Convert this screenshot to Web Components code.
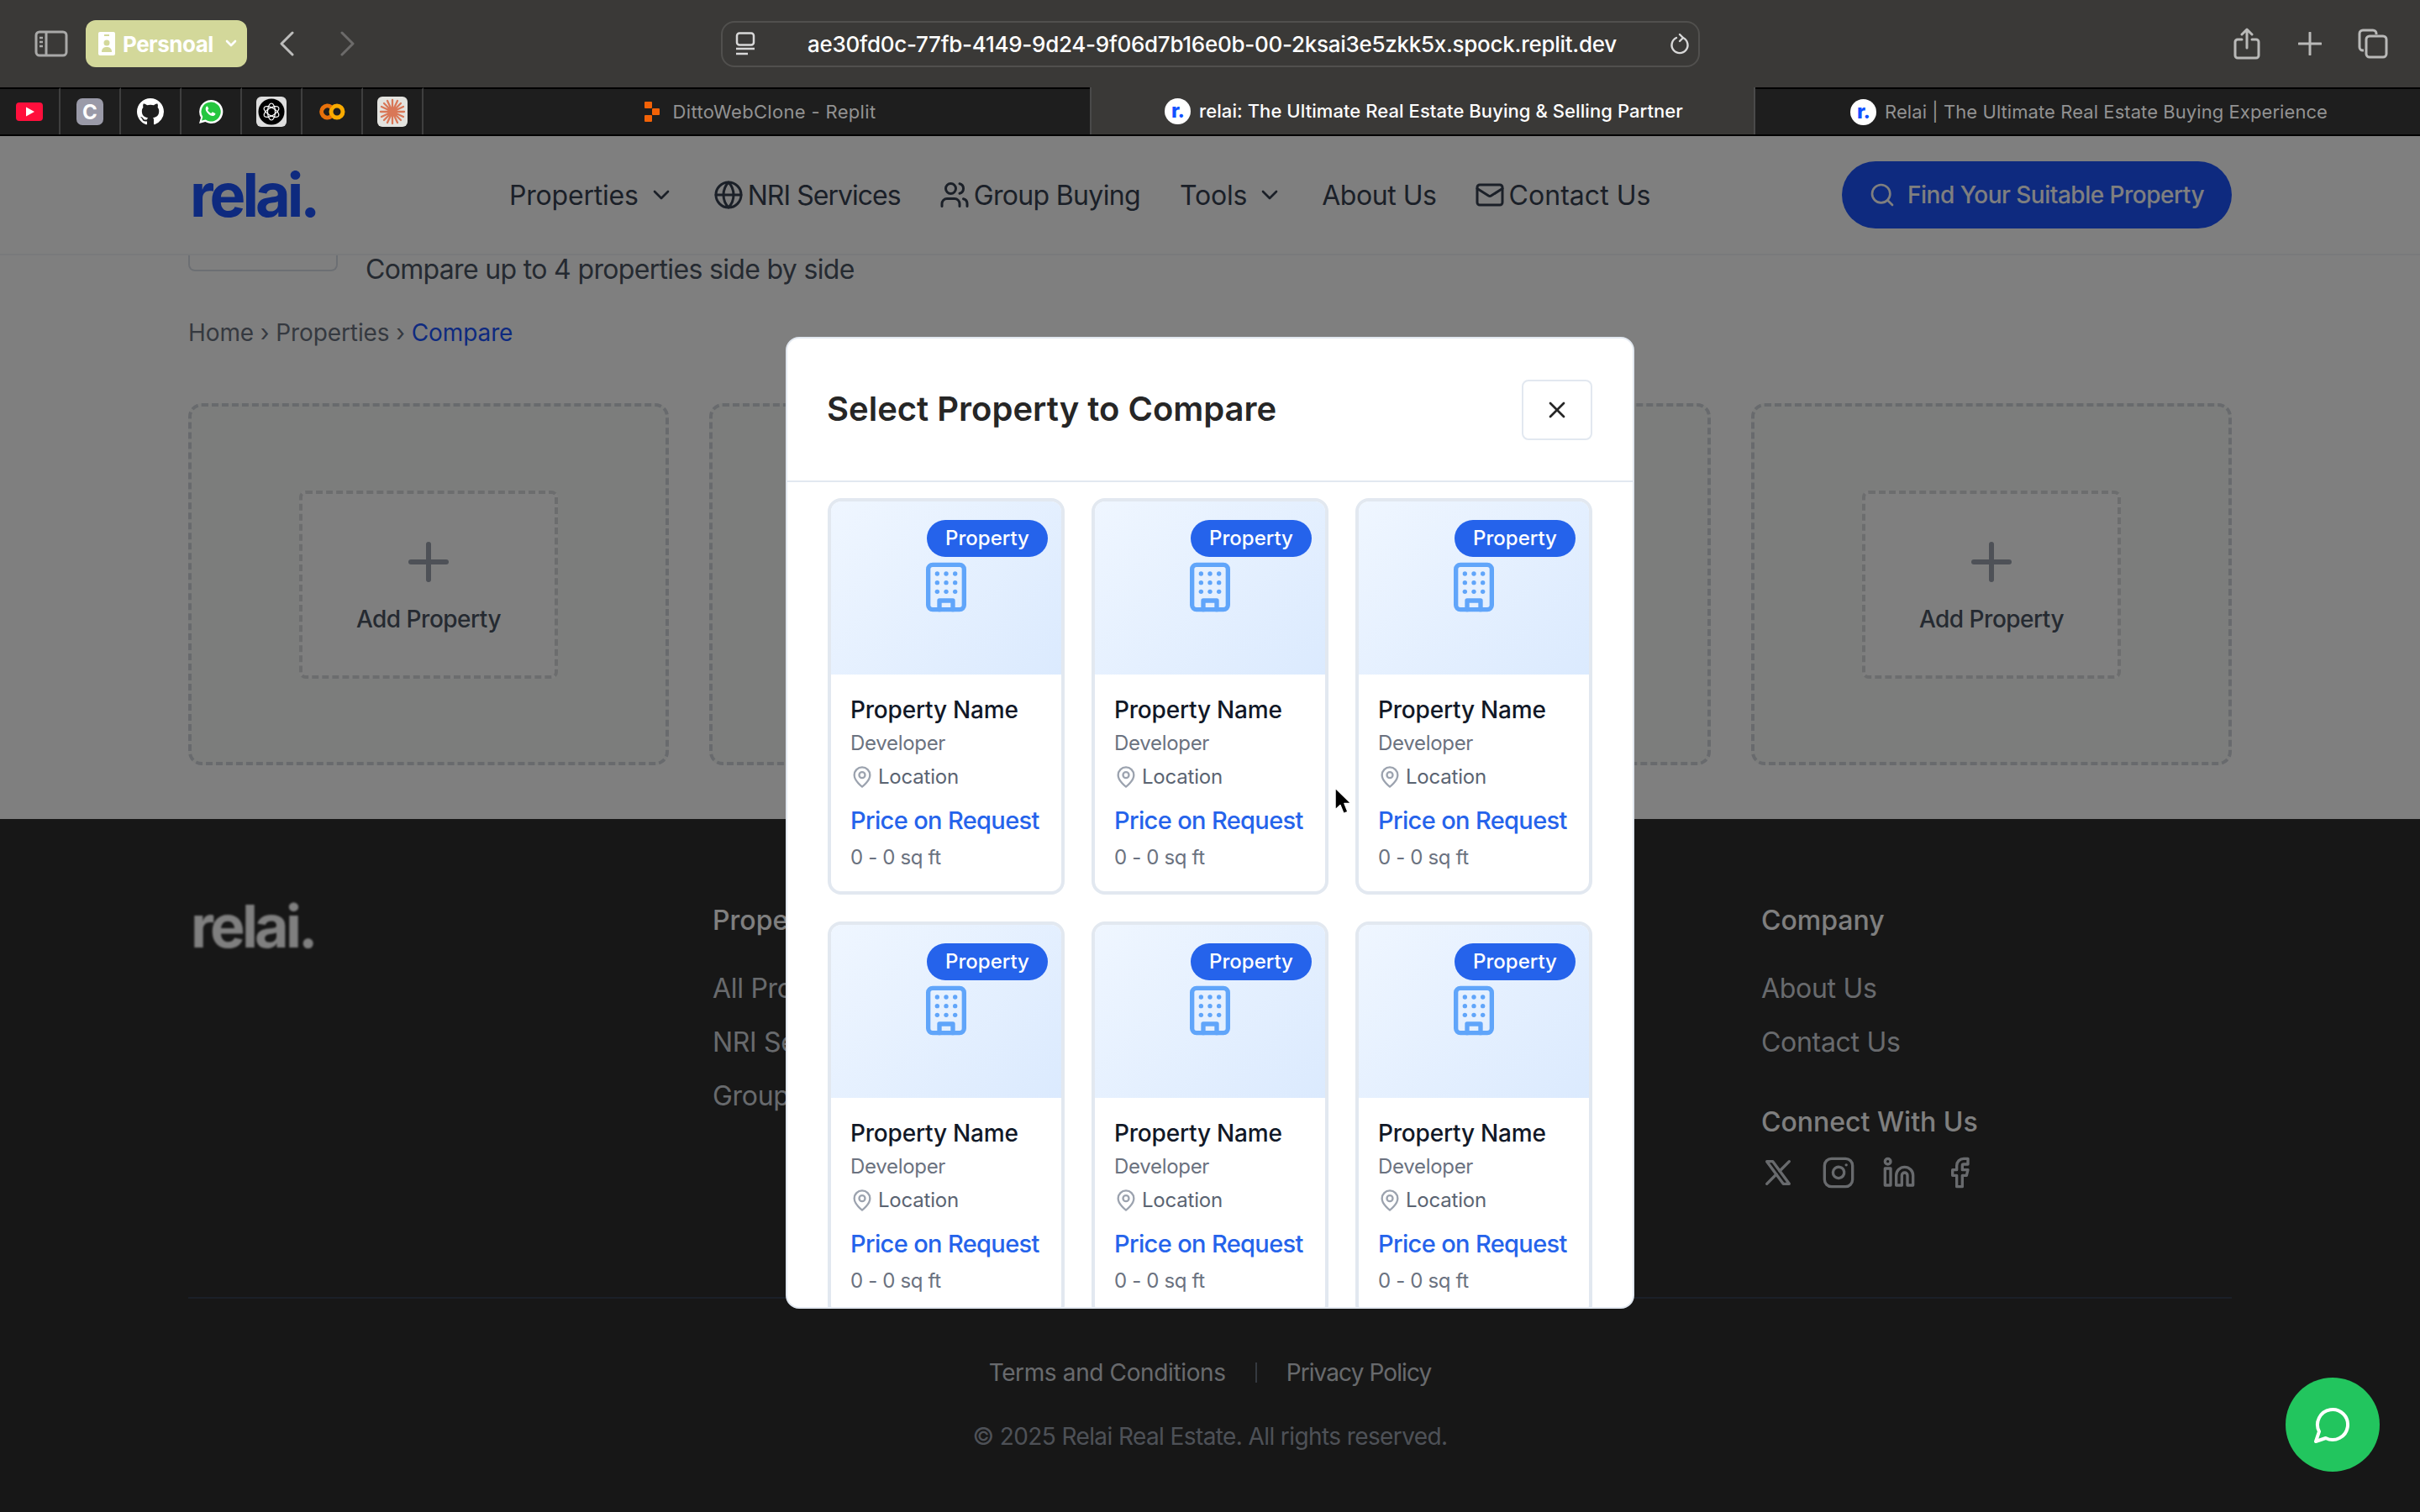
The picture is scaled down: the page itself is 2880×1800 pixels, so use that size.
<!DOCTYPE html>
<html lang="en">
<head>
<meta charset="utf-8">
<title>Relai - Compare</title>
<style>
  html, body { margin: 0; padding: 0; }
  body { width: 2880px; height: 1800px; overflow: hidden; background: #3a3937; font-family: Inter, "Liberation Sans", sans-serif; }
</style>
</head>
<body>
<browser-toolbar></browser-toolbar>
<browser-tabs></browser-tabs>
<app-window>
  <site-nav></site-nav>
  <compare-main></compare-main>
  <site-footer></site-footer>
  <select-modal slot="over"></select-modal>
  <chat-fab slot="over"></chat-fab>
  <mouse-arrow slot="over"></mouse-arrow>
</app-window>

<script>
const lucide = (size, width, body, extra = "") =>
  `<svg width="${size}" height="${size}" viewBox="0 0 24 24" fill="none" stroke="currentColor" stroke-width="${width}" stroke-linecap="round" stroke-linejoin="round" style="flex:none;display:block;${extra}">${body}</svg>`;

const ICONS = {
  chevron: `<path d="m6 9 6 6 6-6"/>`,
  globe: `<circle cx="12" cy="12" r="10"/><path d="M12 2a14.5 14.5 0 0 0 0 20 14.5 14.5 0 0 0 0-20"/><path d="M2 12h20"/>`,
  users: `<path d="M16 21v-2a4 4 0 0 0-4-4H6a4 4 0 0 0-4 4v2"/><circle cx="9" cy="7" r="4"/><path d="M22 21v-2a4 4 0 0 0-3-3.87"/><path d="M16 3.13a4 4 0 0 1 0 7.75"/>`,
  mail: `<rect width="20" height="16" x="2" y="4" rx="2"/><path d="m22 7-8.97 5.7a1.94 1.94 0 0 1-2.06 0L2 7"/>`,
  search: `<circle cx="11" cy="11" r="8"/><path d="m21 21-4.3-4.3"/>`,
  pin: `<path d="M20 10c0 6-8 12-8 12s-8-6-8-12a8 8 0 0 1 16 0Z"/><circle cx="12" cy="10" r="3"/>`,
  x: `<path d="M18 6 6 18"/><path d="m6 6 12 12"/>`,
  plus: `<path d="M5 12h14"/><path d="M12 5v14"/>`,
  building: `<rect width="16" height="20" x="4" y="2" rx="2" ry="2"/><path d="M9 22v-4h6v4"/><path d="M8 6h.01"/><path d="M16 6h.01"/><path d="M12 6h.01"/><path d="M12 10h.01"/><path d="M12 14h.01"/><path d="M16 10h.01"/><path d="M16 14h.01"/><path d="M8 10h.01"/><path d="M8 14h.01"/>`,
  twitter: `<path d="M4 4l11.733 16h4.267l-11.733 -16z"/><path d="M4 20l6.768 -6.768m2.46 -2.46l6.772 -6.772"/>`,
  instagram: `<rect width="20" height="20" x="2" y="2" rx="5" ry="5"/><path d="M16 11.37A4 4 0 1 1 12.63 8 4 4 0 0 1 16 11.37z"/><line x1="17.5" x2="17.51" y1="6.5" y2="6.5"/>`,
  linkedin: `<path d="M16 8a6 6 0 0 1 6 6v7h-4v-7a2 2 0 0 0-2-2 2 2 0 0 0-2 2v7h-4v-7a6 6 0 0 1 6-6z"/><rect width="4" height="12" x="2" y="9"/><circle cx="4" cy="4" r="2"/>`,
  facebook: `<path d="M18 2h-3a5 5 0 0 0-5 5v3H7v4h3v8h4v-8h3l1-4h-4V7a1 1 0 0 1 1-1h3z"/>`,
  message: `<path d="M7.9 20A9 9 0 1 0 4 16.1L2 22Z"/>`
};

class ShadowBox extends HTMLElement {
  constructor() {
    super();
    this.shadowDOM = this.attachShadow({mode: "open"});
  }
  connectedCallback() {
    this.shadowDOM.innerHTML = this.markup();
  }
}

class BrowserToolbar extends ShadowBox {
  markup() {
    return `
    <style>
      :host { display: flex; align-items: center; height: 104px; background: #3a3937; color: #fff; box-sizing: border-box; }
      svg { display: block; flex: none; }
      .side { margin-left: 41px; }
      .profile { display: flex; align-items: center; width: 192px; height: 56px; margin-left: 21px; box-sizing: border-box; padding-left: 15px; background: #d3d89a; border-radius: 12px; font: 700 26px Inter, sans-serif; letter-spacing: -.5px; }
      .profile span { margin-left: 9px; }
      .back { margin-left: 38px; }
      .fwd { margin-left: 55px; }
      .url { display: flex; align-items: center; width: 1165px; height: 55px; margin-left: 435px; box-sizing: border-box; border: 2px solid #51504e; border-radius: 16px; }
      .url b { font: 500 26px Inter, sans-serif; margin-left: 62px; letter-spacing: -.28px; white-space: nowrap; }
      .url .site { margin-left: 15px; }
      .url .reload { margin-left: auto; margin-right: 10px; }
      .share { margin-left: 635px; }
    </style>
    <svg class="side" width="40" height="32" viewBox="0 0 40 32" fill="none" stroke="#a9a9a8" stroke-width="3"><rect x="2" y="2" width="36" height="28" rx="4"/><path d="M14 2v28"/><path d="M6 9h4M6 14h4M6 19h4" stroke-width="2.5"/></svg>
    <div class="profile">
      <svg width="20" height="28" viewBox="0 0 20 28"><rect width="20" height="28" rx="2" fill="#fff"/><circle cx="10" cy="13" r="3.5" fill="#d3d89a"/><path d="M4 24c0-5 3-6 6-6s6 1 6 6z" fill="#d3d89a"/><rect x="7" y="3" width="6" height="2" fill="#d3d89a"/></svg>
      <span>Persnoal</span>
      <svg style="margin-left:14px" width="14" height="10" viewBox="0 0 14 10" fill="none" stroke="#fff" stroke-width="2.6" stroke-linecap="round" stroke-linejoin="round"><path d="m2 2 5 5 5-5"/></svg>
    </div>
    <svg class="back" width="18" height="30" viewBox="0 0 18 30" fill="none" stroke="#bdbdbc" stroke-width="3" stroke-linecap="round" stroke-linejoin="round"><path d="M16 2 3 15l13 13"/></svg>
    <svg class="fwd" width="18" height="30" viewBox="0 0 18 30" fill="none" stroke="#6c6b6a" stroke-width="3" stroke-linecap="round" stroke-linejoin="round"><path d="m2 2 13 13L2 28"/></svg>
    <div class="url">
      <svg class="site" width="24" height="28" viewBox="0 0 24 28" fill="none" stroke="#d8d8d8" stroke-width="2.5"><rect x="2" y="1.5" width="20" height="14" rx="3"/><path d="M1 20h22M1 26h14"/></svg>
      <b>ae30fd0c-77fb-4149-9d24-9f06d7b16e0b-00-2ksai3e5zkk5x.spock.replit.dev</b>
      <svg class="reload" width="24" height="28" viewBox="0 0 24 28" fill="none" stroke="#d8d8d8" stroke-width="2.4" stroke-linecap="round"><path d="M8 7a9.5 9.5 0 1 0 8 0"/><path d="M12 3l4 4-4 4" stroke-linejoin="round"/></svg>
    </div>
    <svg class="share" width="32" height="38" viewBox="0 0 32 38" fill="none" stroke="#b9b9b8" stroke-width="3" stroke-linecap="round" stroke-linejoin="round"><path d="M10 14H5a3 3 0 0 0-3 3v16a3 3 0 0 0 3 3h22a3 3 0 0 0 3-3V17a3 3 0 0 0-3-3h-5"/><path d="M16 24V2M10 8l6-6 6 6"/></svg>
    <svg style="margin-left:45px" width="28" height="28" viewBox="0 0 28 28" fill="none" stroke="#b9b9b8" stroke-width="3" stroke-linecap="round"><path d="M14 1v26M1 14h26"/></svg>
    <svg style="margin-left:43px" width="36" height="36" viewBox="0 0 36 36" fill="none" stroke="#b9b9b8" stroke-width="3"><path d="M7 26H6a4 4 0 0 1-4-4V6a4 4 0 0 1 4-4h12a4 4 0 0 1 4 4v1"/><rect x="10" y="9" width="24" height="25" rx="4"/></svg>`;
  }
}

const RelaiBadge = `<span class="fav">r<i>.</i></span>`;

class BrowserTabs extends ShadowBox {
  markup() {
    return `
    <style>
      :host { display: flex; height: 58px; box-sizing: border-box; background: #1e1e1e; border-bottom: 2px solid #000; }
      svg { display: block; flex: none; }
      .pin { width: 72px; box-sizing: border-box; border-top: 2px solid #000; border-right: 2px solid #3f3f3f; display: flex; align-items: center; justify-content: center; }
      .c { width: 32px; height: 32px; border-radius: 7px; background: #9a9aa8; color: #fff; font: 700 24px Inter, sans-serif; display: flex; align-items: center; justify-content: center; }
      .tab { flex: 1; display: flex; align-items: center; justify-content: center; box-sizing: border-box; padding-left: 3px; font: 400 22px Inter, sans-serif; letter-spacing: .07px; color: #929292; border-top: 2px solid #000; white-space: nowrap; }
      .tab.active { background: #3a3937; color: #fff; border-top: 0; border-left: 2px solid #4a4a4a; border-right: 2px solid #4a4a4a; font-weight: 500; }
      .fav { width: 31px; height: 31px; border-radius: 50%; background: #fff; color: #1251ff; font: 800 24px/29px Inter, sans-serif; letter-spacing: -1px; text-align: center; margin-right: 10px; flex: none; }
      .fav i { font-style: normal; }
      .replit { margin-right: 16px; }
    </style>
    <div class="pin"><svg width="32" height="22" viewBox="0 0 32 22"><rect width="32" height="22" rx="4" fill="#ff0f3c"/><path d="M12 5.5 22 11l-10 5.5z" fill="#fff"/></svg></div>
    <div class="pin"><span class="c">C</span></div>
    <div class="pin"><svg width="32" height="32" viewBox="0 0 16 16" fill="#fff"><path d="M8 0C3.58 0 0 3.58 0 8c0 3.54 2.29 6.53 5.47 7.59.4.07.55-.17.55-.38 0-.19-.01-.82-.01-1.49-2.01.37-2.53-.49-2.69-.94-.09-.23-.48-.94-.82-1.13-.28-.15-.68-.52-.01-.53.63-.01 1.08.58 1.23.82.72 1.21 1.87.87 2.33.66.07-.52.28-.87.51-1.07-1.78-.2-3.64-.89-3.64-3.95 0-.87.31-1.59.82-2.15-.08-.2-.36-1.02.08-2.12 0 0 .67-.21 2.2.82.64-.18 1.32-.27 2-.27.68 0 1.36.09 2 .27 1.53-1.04 2.2-.82 2.2-.82.44 1.1.16 1.92.08 2.12.51.56.82 1.27.82 2.15 0 3.07-1.87 3.75-3.65 3.95.29.25.54.73.54 1.48 0 1.07-.01 1.93-.01 2.2 0 .21.15.46.55.38A8.013 8.013 0 0016 8c0-4.42-3.58-8-8-8z"/></svg></div>
    <div class="pin"><svg width="30" height="30" viewBox="0 0 30 30"><path d="M15 1a14 14 0 0 0-12 21L1 29l7.300-1.900A14 14 0 1 0 15 1z" fill="#fff"/><path d="M15 3.500a11.500 11.500 0 0 0-9.700 17.600L4 25.600l4.600-1.200A11.500 11.500 0 1 0 15 3.500z" fill="#25c63f"/><path d="M11 8.500c-.6 0-1.500.4-2 1.600-.8 2 .1 4.400 2.200 6.700 2.200 2.400 4.800 3.600 6.700 3.200 1.400-.3 2.400-1.400 2.500-2.400 0-.5-.3-.7-.7-.9l-2.500-1.200c-.4-.2-.7 0-.9.3l-1 1.200c-1.700-.6-3.500-2.300-4.200-3.900l.9-1c.3-.3.300-.6.100-1l-1-2.200c-.2-.3-.4-.4-.6-.4z" fill="#fff"/></svg></div>
    <div class="pin"><svg width="36" height="36" viewBox="0 0 36 36"><rect width="36" height="36" rx="6" fill="#dedede"/><circle cx="18" cy="18" r="15.500" fill="#000"/><g fill="none" stroke="#fff" stroke-width="1.200"><ellipse cx="18" cy="18" rx="4.500" ry="10"/><ellipse cx="18" cy="18" rx="4.500" ry="10" transform="rotate(60 18 18)"/><ellipse cx="18" cy="18" rx="4.500" ry="10" transform="rotate(120 18 18)"/></g></svg></div>
    <div class="pin"><svg width="32" height="20" viewBox="0 0 32 20" fill="none" stroke-width="5"><circle cx="22" cy="10" r="7" stroke="#f9ab00"/><path d="M15 4.500a7 7 0 1 0 0 11" stroke="#e8710a"/></svg></div>
    <div class="pin"><svg width="36" height="36" viewBox="0 0 36 36"><rect width="36" height="36" rx="6" fill="#e3e3df"/><g stroke="#d97757" stroke-width="2.300" stroke-linecap="round"><path d="M18 4v28M4 18h28M8 8l20 20M28 8 8 28M12 5l12 26M24 5 12 31M5 12l26 12M31 12 5 24"/></g></svg></div>
    <div class="tab" style="flex:none;width:793px;letter-spacing:.33px;padding-left:8px">
      <svg class="replit" width="18" height="24" viewBox="0 0 18 24" fill="#f26207"><rect width="9" height="8" rx="1"/><rect x="9" y="8" width="9" height="8" rx="1"/><rect y="16" width="9" height="8" rx="1"/></svg>
      DittoWebClone - Replit
    </div>
    <div class="tab active" style="flex:none;width:792px">${RelaiBadge}relai: The Ultimate Real Estate Buying &amp; Selling Partner</div>
    <div class="tab">${RelaiBadge}Relai | The Ultimate Real Estate Buying Experience</div>`;
  }
}

class AppWindow extends ShadowBox {
  markup() {
    return `
    <style>
      :host { display: block; position: relative; height: 1638px; overflow: hidden; background: #fff; }
      .dim { position: absolute; inset: 0; background: rgba(0,0,0,.5); }
    </style>
    <slot></slot>
    <div class="dim"></div>
    <slot name="over"></slot>`;
  }
}

class SiteNav extends ShadowBox {
  markup() {
    return `
    <style>
      :host { display: flex; align-items: center; height: 142px; box-sizing: border-box; padding: 0 224px 0 226px; background: #fff; border-bottom: 2px solid #f3f4f6; color: #374151; font: 400 32px Inter, sans-serif; }
      .logo { font: 700 72px/1 Inter, sans-serif; letter-spacing: -4px; color: #1c54ff; width: 380px; margin-top: -1px; }
      a { display: flex; align-items: center; margin-right: 46px; white-space: nowrap; letter-spacing: -.2px; }
      a svg.ch { margin-left: 11px; }
      a svg.ic { margin-right: 5px; }
      .cta { display: flex; align-items: center; margin-left: auto; width: 464px; height: 80px; box-sizing: border-box; padding-left: 32px; border-radius: 40px; background: #1c54ff; color: #fff; font: 500 28px Inter, sans-serif; letter-spacing: -.5px; white-space: nowrap; }
      .cta svg { margin-right: 14px; }
    </style>
    <div class="logo">relai.</div>
    <a>Properties${lucide(32, 2, ICONS.chevron).replace("<svg", '<svg class="ch"')}</a>
    <a style="letter-spacing:-.97px">${lucide(36, 2, ICONS.globe).replace("<svg", '<svg class="ic"')}NRI Services</a>
    <a style="letter-spacing:-.66px;margin-right:47px">${lucide(36, 2, ICONS.users).replace("<svg", '<svg class="ic"')}Group Buying</a>
    <a>Tools${lucide(32, 2, ICONS.chevron).replace("<svg", '<svg class="ch"')}</a>
    <a style="letter-spacing:-.45px;margin-right:45px">About Us</a>
    <a style="letter-spacing:.05px">${lucide(36, 2, ICONS.mail).replace("<svg", '<svg class="ic"')}Contact Us</a>
    <div class="cta">${lucide(32, 2, ICONS.search)}Find Your Suitable Property</div>`;
  }
}

class CompareSlot extends ShadowBox {
  markup() {
    const inner = this.hasAttribute("empty") ? "" : `
      <div class="add">${lucide(72, 2, ICONS.plus, "color:#9ca3af")}<span>Add Property</span></div>`;
    return `
    <style>
      :host { display: flex; align-items: center; justify-content: center; height: 431px; box-sizing: border-box; border: 4px dashed #d1d5db; border-radius: 16px; background: #f8fbf8; }
      .add { display: flex; flex-direction: column; align-items: center; width: 308px; height: 224px; box-sizing: border-box; padding-top: 45px; border: 4px dashed #d8dadd; border-radius: 8px; background: #fff; }
      span { font: 500 28px/40px Inter, sans-serif; color: #4b5563; margin-top: 12px; letter-spacing: -.5px; }
    </style>${inner}`;
  }
}

class CompareMain extends ShadowBox {
  markup() {
    return `
    <style>
      :host { display: block; padding: 0 224px 64px; height: 671px; box-sizing: border-box; background: #fff; font-family: Inter, sans-serif; }
      .head { display: flex; align-items: flex-start; gap: 33px; }
      .back { width: 178px; height: 19px; box-sizing: border-box; border: 2px solid #d9dee6; border-top: 0; border-radius: 0 0 8px 8px; }
      .sub { font-size: 32px; line-height: 34px; color: #4b5563; letter-spacing: -.67px; }
      .crumbs { margin-top: 38px; font-size: 28px; line-height: 40px; color: #6b7280; letter-spacing: -.1px; }
      .crumbs b { font-weight: 400; color: #1c54ff; }
      .grid { display: grid; grid-template-columns: repeat(4, 1fr); gap: 48px; margin-top: 64px; }
    </style>
    <div class="head"><div class="back"></div><div class="sub">Compare up to 4 properties side by side</div></div>
    <div class="crumbs">Home › Properties › <b>Compare</b></div>
    <div class="grid">
      <compare-slot></compare-slot>
      <compare-slot empty></compare-slot>
      <compare-slot empty></compare-slot>
      <compare-slot></compare-slot>
    </div>`;
  }
}

class SiteFooter extends ShadowBox {
  markup() {
    return `
    <style>
      :host { display: block; box-sizing: border-box; height: 825px; padding: 99px 224px 0; background: #2e2e2e; color: #d1d5db; font: 400 32px Inter, sans-serif; }
      .grid { display: grid; grid-template-columns: repeat(4, 1fr); gap: 64px; }
      .logo { font: 700 70px/1 Inter, sans-serif; letter-spacing: -3.8px; color: #fff; margin: -6px 0 0 3px; filter: blur(1px); }
      h4 { margin: 0; font: 500 32px/44px Inter, sans-serif; color: #fff; }
      p { margin: 20px 0 0; line-height: 44px; letter-spacing: -.3px; }
      h4 + p { margin-top: 37px; }
      p + h4 { margin-top: 51px; }
      .social { display: flex; gap: 32px; margin-top: 18px; color: #d1d5db; }
      .rule { height: 2px; margin-top: 128px; background: #374151; }
      .legal { display: flex; justify-content: center; align-items: center; margin-top: 66px; font-size: 28px; line-height: 44px; }
      .legal i { width: 2px; height: 24px; margin: 0 35px; background: #6b7280; }
      .copy { margin-top: 32px; text-align: center; font-size: 28px; line-height: 44px; color: #9ca3af; letter-spacing: -.6px; }
    </style>
    <div class="grid">
      <div class="logo">relai.</div>
      <div><h4>Properties</h4><p>All Properties</p><p>NRI Services</p><p>Group Buying</p></div>
      <div></div>
      <div>
        <h4>Company</h4><p>About Us</p><p>Contact Us</p>
        <h4>Connect With Us</h4>
        <div class="social">${lucide(40, 2, ICONS.twitter)}${lucide(40, 2, ICONS.instagram)}${lucide(40, 2, ICONS.linkedin)}${lucide(40, 2, ICONS.facebook)}</div>
      </div>
    </div>
    <div class="rule"></div>
    <div class="legal"><span style="letter-spacing:-.37px">Terms and Conditions</span><i></i><span style="letter-spacing:-.9px">Privacy Policy</span></div>
    <div class="copy">© 2025 Relai Real Estate. All rights reserved.</div>`;
  }
}

class PropertyCard extends ShadowBox {
  markup() {
    return `
    <style>
      :host { display: block; box-sizing: border-box; height: 472px; border: 4px solid #e2e8f0; border-radius: 16px; overflow: hidden; background: #fff; font-family: Inter, sans-serif; }
      .img { position: relative; height: 206px; display: flex; align-items: center; justify-content: center; background: linear-gradient(135deg, #eff6ff, #dbeafe); color: #60a5fa; }
      .img svg { margin: -3px 0 0 -1px; }
      .badge { position: absolute; top: 22px; right: 16px; width: 144px; height: 44px; border-radius: 22px; background: #2563eb; color: #fff; font: 500 24px/44px Inter, sans-serif; text-align: center; }
      .body { padding: 24px 0 0 23px; white-space: nowrap; }
      .name { font: 500 28px/36px Inter, sans-serif; letter-spacing: -.2px; color: #111827; }
      .dev { margin-top: 6px; font-size: 24px; line-height: 32px; letter-spacing: -.3px; color: #6b7280; }
      .loc { display: flex; align-items: center; margin-top: 8px; font-size: 24px; line-height: 32px; letter-spacing: -.2px; color: #5b6472; }
      .loc svg { margin-right: 5px; color: #9ca3af; }
      .price { margin-top: 16px; font: 500 29px/40px Inter, sans-serif; letter-spacing: -.64px; color: #2563eb; }
      .area { margin-top: 8px; font-size: 24px; line-height: 32px; letter-spacing: -.35px; color: #6b7280; }
    </style>
    <div class="img"><span class="badge">Property</span>${lucide(64, 2, ICONS.building)}</div>
    <div class="body">
      <div class="name">Property Name</div>
      <div class="dev">Developer</div>
      <div class="loc">${lucide(28, 2, ICONS.pin)}Location</div>
      <div class="price">Price on Request</div>
      <div class="area">0 - 0 sq ft</div>
    </div>`;
  }
}

class SelectModal extends ShadowBox {
  markup() {
    return `
    <style>
      :host { display: block; position: absolute; left: 935px; top: 239px; width: 1010px; height: 1157px; box-sizing: border-box; border: 2px solid #e2e8f0; border-radius: 16px; background: #fff; overflow: hidden; font-family: Inter, sans-serif; }
      header { display: flex; align-items: center; justify-content: space-between; height: 171px; box-sizing: border-box; padding: 0 48px; border-bottom: 2px solid #e2e8f0; }
      h2 { margin: 0 0 2px -1px; font: 600 40px Inter, sans-serif; color: #262626; }
      button { display: flex; align-items: center; justify-content: center; width: 84px; height: 72px; padding: 0; border: 2px solid #e2e8f0; border-radius: 8px; background: #fff; color: #262626; }
      .grid { display: grid; grid-template-columns: repeat(3, 282px); gap: 32px; padding: 19px 48px 0; }
    </style>
    <header>
      <h2>Select Property to Compare</h2>
      <button>${lucide(32, 2, ICONS.x)}</button>
    </header>
    <div class="grid">
      <property-card></property-card><property-card></property-card><property-card></property-card>
      <property-card></property-card><property-card></property-card><property-card></property-card>
    </div>`;
  }
}

class ChatFab extends ShadowBox {
  markup() {
    return `
    <style>
      :host { position: absolute; left: 2720px; top: 1478px; width: 112px; height: 112px; border-radius: 50%; background: #22c55e; display: flex; align-items: center; justify-content: center; color: #fff; }
    </style>
    ${lucide(48, 2, ICONS.message)}`;
  }
}

class MouseArrow extends ShadowBox {
  markup() {
    return `
    <style>:host { position: absolute; left: 1587px; top: 775px; width: 24px; height: 34px; }</style>
    <svg width="24" height="34" viewBox="0 0 24 34"><path d="M2 1v26l6-5.500 4 10 5-2-4-10h8z" fill="#000" stroke="#fff" stroke-width="1.500" stroke-linejoin="round"/></svg>`;
  }
}

customElements.define("browser-toolbar", BrowserToolbar);
customElements.define("browser-tabs", BrowserTabs);
customElements.define("app-window", AppWindow);
customElements.define("site-nav", SiteNav);
customElements.define("compare-slot", CompareSlot);
customElements.define("compare-main", CompareMain);
customElements.define("site-footer", SiteFooter);
customElements.define("property-card", PropertyCard);
customElements.define("select-modal", SelectModal);
customElements.define("chat-fab", ChatFab);
customElements.define("mouse-arrow", MouseArrow);
</script>
</body>
</html>
